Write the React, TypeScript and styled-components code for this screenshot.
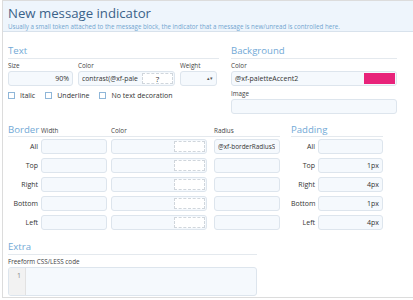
import styled, { createGlobalStyle } from 'styled-components'

const Global = createGlobalStyle`
  body {
    margin: 0;
    background: #fff;
    font-family: "Open Sans", "Noto Sans", sans-serif;
    color: #333;
  }
`

const Frame = styled.div`
  margin-left: 2px;
  width: 411px;
  height: 296px;
  border-left: 1px solid #dcdcdc;
  border-top: 1px solid #dcdcdc;
  border-bottom: 1px solid #dcdcdc;
  overflow: hidden;
`

const Header = styled.div`
  background: #eef5fc;
  border-bottom: 1px solid #d8e2ec;
  height: 31px;
  padding: 4px 0 0 5px;
  box-sizing: border-box;
`

const Title = styled.h1`
  margin: 0;
  font-size: 13.2px;
  font-weight: 400;
  color: #3b6289;
  line-height: 17px;
`

const Sub = styled.div`
  font-size: 6.2px;
  color: #72a5d0;
  line-height: 9px;
`

const Body = styled.div`
  padding: 13px 0 0 5px;
`

const TopRow = styled.div`
  display: flex;
  gap: 12px;
`

const Section = styled.div<{ $w: number }>`
  width: ${p => p.$w}px;
`

const Heading = styled.div`
  font-size: 9.6px;
  color: #72a9d6;
  line-height: 12px;
  border-bottom: 1px solid #e4e9ee;
  padding-bottom: 1px;
  margin-bottom: 2px;
`

const Label = styled.div`
  font-size: 6.3px;
  color: #444;
  line-height: 10px;
  height: 10px;
`

const Fields = styled.div`
  display: flex;
  gap: 5px;
`

const Field = styled.div<{ $w: number }>`
  width: ${p => p.$w}px;
`

const Input = styled.div<{ $w?: number; $right?: boolean }>`
  box-sizing: border-box;
  width: ${p => (p.$w ? `${p.$w}px` : '100%')};
  height: 15px;
  background: #f5f9fd;
  border: 1px solid #dde5ed;
  border-radius: 3px;
  font-size: 7px;
  line-height: 13px;
  color: #333;
  padding: 0 3px;
  display: flex;
  align-items: center;
  justify-content: ${p => (p.$right ? 'flex-end' : 'space-between')};
  white-space: nowrap;
  overflow: hidden;
`

const Clip = styled.span<{ $size?: number }>`
  overflow: hidden;
  white-space: nowrap;
  font-size: ${p => p.$size || 6.8}px;
`

const Swatch = styled.span<{ $color?: string }>`
  flex: none;
  box-sizing: border-box;
  width: 31px;
  height: 11px;
  margin-right: -2px;
  background: ${p => p.$color || '#fff'};
  border: ${p => (p.$color ? 'none' : '1px dashed #d0d6dc')};
  font-size: 8px;
  text-align: center;
  line-height: 9px;
  color: #333;
`

const Arrow = styled.span`
  font-size: 5px;
  color: #555;
`

const Checks = styled.div`
  display: flex;
  gap: 10px;
  margin-top: 5px;
`

const Check = styled.label`
  display: flex;
  align-items: center;
  gap: 5px;
  font-size: 7px;
  color: #333;
  &::before {
    content: '';
    width: 5px;
    height: 5px;
    border: 1px solid #8fb6d8;
    background: #fff;
  }
`

const MidRow = styled.div`
  display: flex;
  gap: 11px;
  margin-top: 10px;
`

const GridHead = styled.div<{ $cols: string }>`
  display: grid;
  grid-template-columns: ${p => p.$cols};
  align-items: end;
  border-bottom: 1px solid #e4e9ee;
`

const HeadText = styled.span`
  font-size: 9.6px;
  color: #72a9d6;
  line-height: 12px;
`

const ColLabel = styled.span`
  font-size: 6.3px;
  color: #444;
  line-height: 11px;
`

const Row = styled.div<{ $cols: string }>`
  display: grid;
  grid-template-columns: ${p => p.$cols};
  align-items: center;
  height: 19px;
`

const RowLabel = styled.span`
  font-size: 7px;
  color: #333;
  text-align: right;
  padding-right: 3px;
`

const Extra = styled.div`
  width: 249px;
  margin-top: 9px;
`

const Code = styled.div`
  box-sizing: border-box;
  height: 29px;
  display: flex;
  border: 1px solid #dde5ed;
  border-radius: 3px;
  overflow: hidden;
  background: #f5f9fd;
`

const Gutter = styled.div`
  width: 17px;
  background: #f2f2f2;
  border-right: 1px solid #e2e2e2;
  font-size: 7px;
  color: #888;
  text-align: right;
  padding: 3px 4px 0 0;
  box-sizing: border-box;
`

const borderCols = '33px 66px 100px 73px'
const padCols = '27px 65px'
const sides = ['All', 'Top', 'Right', 'Bottom', 'Left']
const padValues: Record<string, string> = { All: '', Top: '1px', Right: '4px', Bottom: '1px', Left: '4px' }

export default function App() {
  return (
    <>
      <Global />
      <Frame>
        <Header>
          <Title>New message indicator</Title>
          <Sub>
            Usually a small token attached to the message block, the indicator that a message is new/unread is controlled here.
          </Sub>
        </Header>
        <Body>
          <TopRow>
            <Section $w={211}>
              <Heading>Text</Heading>
              <Fields>
                <Field $w={65}>
                  <Label>Size</Label>
                  <Input $right>90%</Input>
                </Field>
                <Field $w={97}>
                  <Label>Color</Label>
                  <Input>
                    <Clip>contrast(@xf-pale</Clip>
                    <Swatch>?</Swatch>
                  </Input>
                </Field>
                <Field $w={37}>
                  <Label>Weight</Label>
                  <Input $right>
                    <Arrow>▴▾</Arrow>
                  </Input>
                </Field>
              </Fields>
              <Checks>
                <Check>Italic</Check>
                <Check>Underline</Check>
                <Check>No text decoration</Check>
              </Checks>
            </Section>
            <Section $w={166}>
              <Heading>Background</Heading>
              <Label>Color</Label>
              <Input>
                @xf-paletteAccent2
                <Swatch $color="#e8237a" />
              </Input>
              <Label style={{ marginTop: 3 }}>Image</Label>
              <Input />
            </Section>
          </TopRow>
          <MidRow>
            <Section $w={272}>
              <GridHead $cols={borderCols}>
                <HeadText>Border</HeadText>
                <ColLabel>Width</ColLabel>
                <ColLabel style={{ paddingLeft: 4 }}>Color</ColLabel>
                <ColLabel style={{ paddingLeft: 7 }}>Radius</ColLabel>
              </GridHead>
              {sides.map(s => (
                <Row key={s} $cols={borderCols}>
                  <RowLabel>{s}</RowLabel>
                  <Input $w={66} />
                  <Input $w={96} style={{ marginLeft: 4 }}>
                    <span />
                    <Swatch />
                  </Input>
                  <Input $w={66} style={{ marginLeft: 7 }}>
                    <Clip $size={6.4}>{s === 'All' ? '@xf-borderRadiusS' : ''}</Clip>
                  </Input>
                </Row>
              ))}
            </Section>
            <Section $w={92}>
              <GridHead $cols="1fr">
                <HeadText>Padding</HeadText>
              </GridHead>
              {sides.map(s => (
                <Row key={s} $cols={padCols}>
                  <RowLabel>{s}</RowLabel>
                  <Input $right>{padValues[s]}</Input>
                </Row>
              ))}
            </Section>
          </MidRow>
          <Extra>
            <Heading>Extra</Heading>
            <Label>Freeform CSS/LESS code</Label>
            <Code>
              <Gutter>1</Gutter>
            </Code>
          </Extra>
        </Body>
      </Frame>
    </>
  )
}
